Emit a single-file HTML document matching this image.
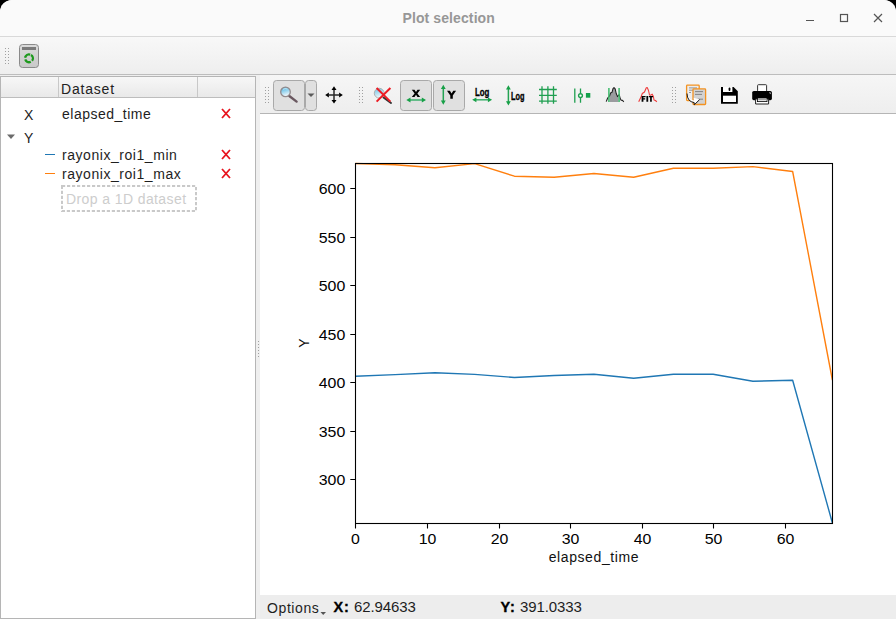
<!DOCTYPE html>
<html><head><meta charset="utf-8">
<style>
*{margin:0;padding:0;box-sizing:border-box}
html,body{width:896px;height:619px;overflow:hidden;background:#000}
body{font-family:"Liberation Sans",sans-serif;position:relative;color:#1e1e1e}
.a{position:absolute}
#win{position:absolute;left:0;top:0;width:896px;height:619px;background:#efefef;border-radius:12px 12px 0 0;overflow:hidden}
#title{position:absolute;left:0;top:0;width:896px;height:36px;background:#fafafa}
#tsep{position:absolute;left:0;top:36px;width:896px;height:1px;background:#d9d9d9}
#tb1{position:absolute;left:0;top:37px;width:896px;height:37px;background:linear-gradient(#f8f8f8,#eeeeee)}
#tb1sep{position:absolute;left:0;top:74px;width:896px;height:1px;background:#bdbdbd}
.t{position:absolute;white-space:nowrap;line-height:1}
.dots{position:absolute;width:4px;background-image:radial-gradient(circle at 0.5px 0.5px,#a0a0a0 0.8px,transparent 0.9px);background-size:3px 3px}
</style></head><body>
<div id="win">
  <div id="title"></div>
  <div class="t" style="left:402.5px;top:11px;font-size:14px;font-weight:bold;letter-spacing:0.1px;color:#979797">Plot selection</div>
  <!-- window controls -->
  <svg class="a" style="left:0;top:0" width="896" height="36">
    <line x1="806" y1="20.5" x2="814" y2="20.5" stroke="#555" stroke-width="1.2"/>
    <rect x="840.5" y="14.5" width="7" height="7" fill="none" stroke="#555" stroke-width="1.2"/>
    <path d="M874 14 L882 22 M882 14 L874 22" stroke="#555" stroke-width="1.2"/>
  </svg>
  <div id="tsep"></div>
  <div id="tb1"></div>
  <div id="tb1sep"></div>
  <div class="dots" style="left:5px;top:48px;height:16px"></div>
  <!-- recycle button -->
  <svg class="a" style="left:18px;top:43px" width="22" height="26">
    <defs><linearGradient id="rg" x1="0" y1="0" x2="0" y2="1"><stop offset="0" stop-color="#dadada"/><stop offset="1" stop-color="#c9c9c9"/></linearGradient></defs>
    <rect x="1.5" y="1.5" width="19" height="23" rx="3" fill="url(#rg)" stroke="#8a8a8a" stroke-width="1"/>
    <rect x="4" y="4" width="14" height="3" fill="#7a7a7a"/>
    <circle cx="11" cy="15.3" r="3.9" fill="none" stroke="#1e9a1e" stroke-width="2.3" stroke-dasharray="6.6 1.6" transform="rotate(-60 11 15.3)"/>
  </svg>

  <!-- left tree panel -->
  <div class="a" style="left:0;top:76px;width:256px;height:543px;background:#fff;border:1px solid #b5b5b5"></div>
  <div class="a" style="left:1px;top:77px;width:254px;height:21px;background:linear-gradient(#f7f7f7,#e9e9e9);border-bottom:1px solid #bdbdbd"></div>
  <div class="a" style="left:58px;top:77px;width:1px;height:20px;background:#c8c8c8"></div>
  <div class="a" style="left:197px;top:77px;width:1px;height:20px;background:#c8c8c8"></div>
  <div class="t" style="left:61px;top:82px;font-size:14px;letter-spacing:0.8px;color:#222">Dataset</div>

  <div class="t" style="left:24px;top:108px;font-size:14px;color:#222">X</div>
  <div class="t" style="left:62px;top:107px;font-size:14px;letter-spacing:0.5px">elapsed_time</div>
  <svg class="a" style="left:220px;top:107px" width="12" height="13"><path d="M2 2 L10 11 M10 2 L2 11" stroke="#e8141e" stroke-width="1.8"/></svg>

  <svg class="a" style="left:6px;top:133px" width="10" height="8"><path d="M1 1.5 L9 1.5 L5 6 Z" fill="#6b6b6b"/></svg>
  <div class="t" style="left:24px;top:131px;font-size:14px;color:#222">Y</div>

  <div class="a" style="left:45px;top:154px;width:10px;height:1px;background:#1f77b4"></div>
  <div class="t" style="left:62px;top:148px;font-size:14px;letter-spacing:0.55px">rayonix_roi1_min</div>
  <svg class="a" style="left:220px;top:148px" width="12" height="13"><path d="M2 2 L10 11 M10 2 L2 11" stroke="#e8141e" stroke-width="1.8"/></svg>

  <div class="a" style="left:45px;top:173px;width:10px;height:1px;background:#ff7f0e"></div>
  <div class="t" style="left:62px;top:167px;font-size:14px;letter-spacing:0.55px">rayonix_roi1_max</div>
  <svg class="a" style="left:220px;top:167px" width="12" height="13"><path d="M2 2 L10 11 M10 2 L2 11" stroke="#e8141e" stroke-width="1.8"/></svg>

  <svg class="a" style="left:61px;top:185px" width="136" height="27"><rect x="1" y="1" width="134" height="25" fill="none" stroke="#c9c9c9" stroke-width="2" stroke-dasharray="3.2 1.8"/></svg>
  <div class="t" style="left:66px;top:192px;font-size:14px;letter-spacing:0.4px;color:#cdcdcd">Drop a 1D dataset</div>

  <!-- splitter dots -->
  <div class="dots" style="left:258px;top:341px;height:17px;width:2px"></div>

  <!-- plot toolbar -->
  <div class="a" style="left:260px;top:75px;width:636px;height:38px;background:linear-gradient(#f6f6f6,#eeeeee)"></div>
  <div class="a" style="left:260px;top:113px;width:636px;height:1px;background:#b5b5b5"></div>
  <div class="dots" style="left:265px;top:87px;height:16px"></div>
  <div class="dots" style="left:359px;top:87px;height:16px"></div>
  <div class="dots" style="left:672px;top:87px;height:16px"></div>

  <svg class="a" style="left:260px;top:75px" width="636" height="38" viewBox="260 75 636 38">
    <!-- zoom button -->
    <rect x="273.5" y="80.5" width="31" height="30" rx="3" fill="#e0e0e0" stroke="#a9a9a9"/>
    <rect x="305.5" y="80.5" width="11" height="30" rx="3" fill="#e0e0e0" stroke="#a9a9a9"/>
    <path d="M307.5 93.5 L314.5 93.5 L311 97 Z" fill="#5a5a5a"/>
    <defs><linearGradient id="lens" x1="0" y1="0" x2="0.3" y2="1"><stop offset="0" stop-color="#3aaee0"/><stop offset="1" stop-color="#f2f8fb"/></linearGradient></defs>
    <line x1="289.3" y1="96" x2="296.6" y2="101.6" stroke="#6a5860" stroke-width="2.4" stroke-linecap="round"/>
    <circle cx="285.5" cy="91.9" r="4.8" fill="url(#lens)" stroke="#928a8c" stroke-width="1.3"/><path d="M283 89.3 Q285 88 287.5 89" fill="none" stroke="#fff" stroke-width="0.8" opacity="0.7"/>
    <!-- pan -->
    <path d="M334 89.5 V100.5 M329 95 H339" stroke="#2a2a2a" stroke-width="1.5"/>
    <g fill="#000">
      <path d="M334 86.2 L336.5 89.9 L331.5 89.9 Z"/><path d="M334 103.6 L336.5 99.9 L331.5 99.9 Z"/>
      <path d="M325.2 95 L328.9 92.5 L328.9 97.5 Z"/><path d="M342.8 95 L339.1 92.5 L339.1 97.5 Z"/>
    </g>
    <!-- reset zoom -->
    <line x1="383.5" y1="97.5" x2="391" y2="103" stroke="#333" stroke-width="2" stroke-linecap="round"/>
    <circle cx="379.2" cy="93.2" r="4.9" fill="url(#lens)" stroke="#9a9a9a" stroke-width="1" opacity="0.75"/>
    <path d="M376.6 88 L390.4 101.6 M390.4 88 L376.6 101.6" stroke="#ec1c24" stroke-width="2"/>
    <!-- X button -->
    <rect x="400.5" y="80.5" width="31" height="30" rx="3" fill="#e0e0e0" stroke="#a9a9a9"/>
    <path d="M411.8 89.7 L414.5 89.7 L416 92 L417.5 89.7 L420.2 89.7 L417.4 93.4 L420.2 97.1 L417.5 97.1 L416 94.8 L414.5 97.1 L411.8 97.1 L414.6 93.4 Z" fill="#000"/>
    <g><rect x="409.3" y="99.25" width="13.699999999999989" height="1.5" fill="#3db06c"/><path d="M406.3 100 L410.5 97.6 L410.5 102.4 Z M426 100 L421.8 97.6 L421.8 102.4 Z" fill="#17a047"/></g>
    <!-- Y button -->
    <rect x="433.5" y="80.5" width="31" height="30" rx="3" fill="#e0e0e0" stroke="#a9a9a9"/>
    <path d="M447 90.8 L449.9 90.8 L451.6 93.6 L453.3 90.8 L456.1 90.8 L452.8 95.5 L452.8 98.8 L450.3 98.8 L450.3 95.5 Z" fill="#000"/>
    <g><rect x="442.55" y="87.7" width="1.5" height="14.099999999999994" fill="#24a353"/><path d="M443.3 84.7 L440.90000000000003 88.9 L445.7 88.9 Z M443.3 104.8 L440.90000000000003 100.6 L445.7 100.6 Z" fill="#17a047"/></g>
    <!-- log x -->
    <text x="475" y="95.8" font-family="Liberation Sans" font-weight="bold" font-size="10" textLength="14.4" lengthAdjust="spacingAndGlyphs" fill="#000" stroke="#000" stroke-width="0.3">Log</text>
    <g><rect x="475.2" y="99.05" width="13.900000000000034" height="1.5" fill="#3db06c"/><path d="M472.2 99.8 L476.4 97.39999999999999 L476.4 102.2 Z M492.1 99.8 L487.90000000000003 97.39999999999999 L487.90000000000003 102.2 Z" fill="#17a047"/></g>
    <!-- log y -->
    <g><rect x="507.65" y="88.3" width="1.5" height="14.100000000000009" fill="#24a353"/><path d="M508.4 85.3 L506.0 89.5 L510.79999999999995 89.5 Z M508.4 105.4 L506.0 101.2 L510.79999999999995 101.2 Z" fill="#17a047"/></g>
    <text x="511" y="99.5" font-family="Liberation Sans" font-weight="bold" font-size="10" textLength="13.5" lengthAdjust="spacingAndGlyphs" fill="#000" stroke="#000" stroke-width="0.3">Log</text>
    <!-- grid -->
    <g stroke="#1f9f50" stroke-width="1.3">
      <path d="M542 86.3 V103.8 M547.9 86.3 V103.8 M553.5 86.3 V103.8 M539 89.5 H556.8 M539 95.4 H556.8 M539 101.1 H556.8"/>
    </g>
    <!-- curve style -->
    <g stroke="#1f9f50" stroke-width="1.3" fill="none">
      <path d="M574.8 88.4 V102.8 M580.5 88.4 V93.5 M580.5 97.7 V102.8"/>
      <circle cx="580.5" cy="95.6" r="1.9" fill="#fff" stroke-width="1.4"/>
    </g>
    <rect x="585.9" y="93" width="4.4" height="4.7" fill="#12a04a"/>
    <!-- stats -->
    <path d="M609.5 102 L609.5 96 L610.5 93 L612 92.3 L613 88.5 L614 87.6 L615 88.5 L616 93 L617 96.2 L618.5 96.5 L618.5 102 Z" fill="#9b9b9f"/>
    <path d="M606.2 101.6 L607.6 98.2 L609.5 96 L610.6 93 L612 92.3 L613 88.6 L614 87.6 L615.2 88.8 L616.2 93.5 L617.5 96.6 L619.2 94.6 L620.3 98.8 L621.2 100.3 L622.5 100.4 L623.8 101.8" fill="none" stroke="#222" stroke-width="1.1" stroke-linejoin="round"/>
    <path d="M608.9 88 V102 M619.1 88 V102" stroke="#3cba6a" stroke-width="1.5"/>
    <!-- fit -->
    <path d="M638.7 101.8 L641 97 L642.3 93.5 L644.5 92 L646.3 87.8 L647.3 87.6 L648.5 90.5 L649.5 95 L650.5 95.2 L652.2 94.2 L653.4 96.5 L654 100 L655.5 100.5 L656.8 101.8" fill="none" stroke="#ee3a3a" stroke-width="1.1" stroke-linejoin="round"/>
    <path d="M641.6 95.9 H645.6 V97.3 H643.4 V98.2 H645.2 V99.5 H643.4 V101.7 H641.6 Z M646.4 95.9 H648.2 V101.7 H646.4 Z M648.9 95.9 H653 V97.3 H651.8 V101.7 H650.1 V97.3 H648.9 Z" fill="#000"/>
    <!-- copy -->
    <rect x="686.6" y="85.2" width="12.6" height="15.4" rx="0.8" fill="#ededed" stroke="#f39220" stroke-width="1.3"/>
    <path d="M689 87.9 H697 M689 90.2 H693 M689 92.5 H691" stroke="#8a8a8a" stroke-width="0.9"/>
    <rect x="693" y="88.9" width="12.6" height="15.6" rx="0.8" fill="#d2d2d2" stroke="#f39220" stroke-width="1.3"/>
    <path d="M695 91.6 H703 M695 94.4 H702 M698 99.2 H703" stroke="#7a7a7a" stroke-width="0.9"/>
    <path d="M687.2 92 Q687.6 99.6 694.2 100.6 L693.6 97.8 L699.6 99.6 L694.3 104.8 L694.4 102.6 Q687.4 102 687.2 92 Z" fill="#fff"/>
    <path d="M687 93.5 Q687.2 101.6 694.2 102.6 L694.3 104.8 L699.6 99.6" fill="none" stroke="#151515" stroke-width="1"/>
    <!-- save -->
    <path d="M721 87 H733.6 L737.8 91.2 V103.8 H721 Z" fill="#000"/>
    <rect x="723" y="87" width="9.4" height="5" fill="#fff"/>
    <rect x="728.6" y="87.6" width="1.8" height="3.4" rx="0.9" fill="#000"/>
    <rect x="723" y="95.7" width="13" height="6.3" fill="#fff"/>
    <!-- print -->
    <rect x="757.6" y="84.7" width="9" height="7" rx="0.8" fill="#fff" stroke="#333" stroke-width="1"/>
    <rect x="752.2" y="91" width="19.7" height="9.2" rx="1.6" fill="#000"/>
    <path d="M769 92.6 L770.6 92.6 L770.6 94.2 Z" fill="#fff"/>
    <path d="M755.6 104 V99 H768.6 V104 Z" fill="#fff" stroke="#222" stroke-width="1"/>
    <rect x="757.4" y="98" width="9.6" height="3.6" fill="#fff" stroke="#000" stroke-width="0.8"/>
    <rect x="758.2" y="99.1" width="8" height="1.2" fill="#999"/>
  </svg>

  <!-- plot area -->
  <div class="a" style="left:260px;top:114px;width:636px;height:481px;background:#fff"></div>
  <svg class="a" style="left:260px;top:114px" width="636" height="481" viewBox="260 114 636 481">
    
    <g font-family="Liberation Sans" font-size="14" fill="#000">
      <text x="351.08" y="544" textLength="8.84" lengthAdjust="spacingAndGlyphs">0</text>
      <text x="418.66" y="544" textLength="17.68" lengthAdjust="spacingAndGlyphs">10</text>
      <text x="490.66" y="544" textLength="17.68" lengthAdjust="spacingAndGlyphs">20</text>
      <text x="561.66" y="544" textLength="17.68" lengthAdjust="spacingAndGlyphs">30</text>
      <text x="633.66" y="544" textLength="17.68" lengthAdjust="spacingAndGlyphs">40</text>
      <text x="704.66" y="544" textLength="17.68" lengthAdjust="spacingAndGlyphs">50</text>
      <text x="776.66" y="544" textLength="17.68" lengthAdjust="spacingAndGlyphs">60</text>
    </g>
    <g font-family="Liberation Sans" font-size="14" fill="#000">
      <text x="318.78" y="193.50" textLength="26.52" lengthAdjust="spacingAndGlyphs">600</text>
      <text x="318.78" y="242.50" textLength="26.52" lengthAdjust="spacingAndGlyphs">550</text>
      <text x="318.78" y="290.50" textLength="26.52" lengthAdjust="spacingAndGlyphs">500</text>
      <text x="318.78" y="339.50" textLength="26.52" lengthAdjust="spacingAndGlyphs">450</text>
      <text x="318.78" y="387.50" textLength="26.52" lengthAdjust="spacingAndGlyphs">400</text>
      <text x="318.78" y="436.50" textLength="26.52" lengthAdjust="spacingAndGlyphs">350</text>
      <text x="318.78" y="484.50" textLength="26.52" lengthAdjust="spacingAndGlyphs">300</text>
    </g>
    <text x="593.9" y="562.2" font-family="Liberation Sans" font-size="14" fill="#111" text-anchor="middle" letter-spacing="0.6">elapsed_time</text>
    <text transform="translate(309 343) rotate(-90)" font-family="Liberation Sans" font-size="14" fill="#111" text-anchor="middle">Y</text>
    <polyline fill="none" stroke="#ff7f0e" stroke-width="1.4" stroke-linejoin="round" points="355.4,163.5 395.15,164.8 434.9,167.7 474.65,163.6 514.4,176.2 554.15,177.3 593.9,173.5 633.65,177.3 673.4,168.3 713.15,168.3 752.9,166.6 792.65,171.5 832.4,380"/>
    <polyline fill="none" stroke="#1f77b4" stroke-width="1.4" stroke-linejoin="round" points="355.4,376.3 395.15,374.6 434.9,372.7 474.65,374.4 514.4,377.5 554.15,375.5 593.9,374.3 633.65,378.3 673.4,374.2 713.15,374.2 752.9,381.2 792.65,380.3 832.4,523"/>
    <g stroke="#000" stroke-width="1.1" fill="none">
      <rect x="355.5" y="163.5" width="477" height="360"/>
      <path d="M355.5 523.5 V528.6 M427.5 523.5 V528.6 M499.5 523.5 V528.6 M570.5 523.5 V528.6 M642.5 523.5 V528.6 M713.5 523.5 V528.6 M785.5 523.5 V528.6"/>
      <path d="M350.3 188.5 H355.5 M350.3 237.5 H355.5 M350.3 285.5 H355.5 M350.3 334.5 H355.5 M350.3 382.5 H355.5 M350.3 431.5 H355.5 M350.3 479.5 H355.5"/>
    </g>
  </svg>

  <!-- status bar -->
  <div class="a" style="left:260px;top:595px;width:636px;height:24px;background:#ededed"></div>
  <div class="t" style="left:267px;top:601px;font-size:14px;letter-spacing:0.6px">Options</div>
  <svg class="a" style="left:320px;top:611px" width="7" height="5"><path d="M0.5 1 L6 1 L3.2 4 Z" fill="#555"/></svg>
  <div class="t" style="left:333.5px;top:600px;font-size:14.5px;font-weight:bold;letter-spacing:0.9px;-webkit-text-stroke:0.35px #000;color:#000">X:</div>
  <div class="t" style="left:354px;top:599px;font-size:15px;letter-spacing:-0.1px">62.94633</div>
  <div class="t" style="left:500.5px;top:600px;font-size:14.5px;font-weight:bold;letter-spacing:0.9px;-webkit-text-stroke:0.35px #000;color:#000">Y:</div>
  <div class="t" style="left:520px;top:599px;font-size:15px;letter-spacing:-0.1px">391.0333</div>
</div>
</body></html>
